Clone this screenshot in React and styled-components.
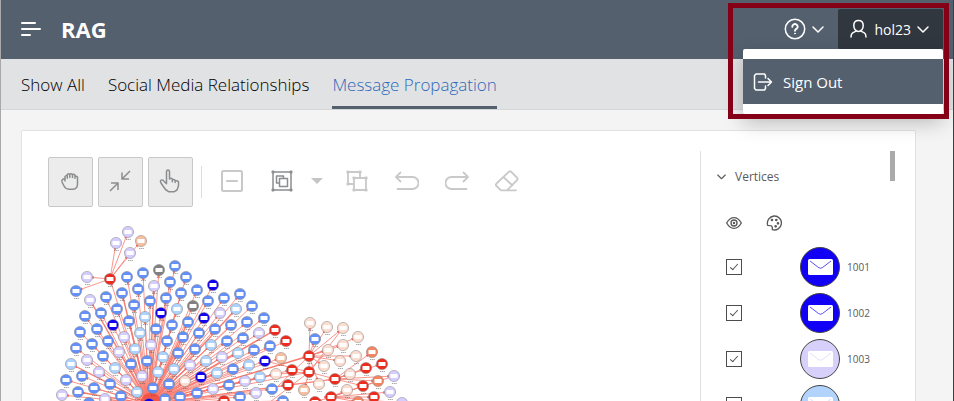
import React from "react";
import styled, { createGlobalStyle, css } from "styled-components";

const GlobalStyle = createGlobalStyle`
  *, *::before, *::after { box-sizing: border-box; }
  body {
    margin: 0;
    overflow: hidden;
    font-family: "Open Sans", "Noto Sans", sans-serif;
    color: #1b1d1f;
  }
  button { font: inherit; color: inherit; border: 0; background: none; padding: 0; cursor: pointer; }
  svg { display: block; flex: none; }
`;

const Page = styled.div`
  position: relative;
  display: flex;
  flex-direction: column;
  height: 100vh;
  background: #f4f4f4;
  border-left: 1px solid #a9a9a9;
  border-right: 1px solid #3b3f44;
`;

const Header = styled.header`
  display: flex;
  align-items: center;
  flex: none;
  height: 59px;
  padding: 0 10px 1px 20px;
  background: #54606e;
  color: #fff;
`;

const Brand = styled.h1`
  flex: 1;
  margin: 0 0 0 20px;
  font-size: 22px;
  line-height: 28px;
  font-weight: 700;
`;

const HeaderButton = styled.button`
  display: flex;
  align-items: center;
  gap: 6px;
  height: 40px;
  padding: 0 14px 0 12px;
  border-radius: 2px;
  font-size: 14px;
  background: ${(p) => (p.$open ? "#30373f" : "transparent")};
`;

const UserMenu = styled.div`
  position: relative;
`;

const Menu = styled.div`
  position: absolute;
  z-index: 2;
  top: 100%;
  right: 0;
  width: 200px;
  padding: 10px 0;
  border-radius: 2px;
  background: #fff;
  box-shadow: 0 8px 20px rgba(0, 0, 0, 0.25);
`;

const MenuItem = styled.button`
  display: flex;
  align-items: center;
  gap: 10px;
  width: 100%;
  height: 45px;
  padding: 0 10px;
  background: #54606e;
  color: #fff;
  font-size: 15px;
`;

const Highlight = styled.div`
  position: absolute;
  z-index: 3;
  top: 3px;
  right: 4px;
  width: 221px;
  height: 116px;
  border: 5px solid #850016;
  pointer-events: none;
`;

const Tabs = styled.nav`
  display: flex;
  flex: none;
  gap: 23px;
  height: 51px;
  padding: 0 20px;
  background: #e1e2e4;
  border-bottom: 1px solid #d6d7d8;
`;

const Tab = styled.a`
  display: flex;
  align-items: center;
  height: 50px;
  border-top: 3px solid transparent;
  border-bottom: 3px solid ${(p) => (p.$active ? "#54606e" : "transparent")};
  color: ${(p) => (p.$active ? "#2f68b8" : "#000")};
  font-size: 17px;
  font-weight: 300;
  text-decoration: none;
  white-space: nowrap;
`;

const Card = styled.main`
  display: flex;
  flex: 1;
  min-height: 0;
  margin: 20px 37px 0 20px;
  padding: 20px 20px 0 26px;
  overflow: hidden;
  background: #fff;
  border: 1px solid #e2e2e2;
  border-bottom: 0;
  border-radius: 2px 2px 0 0;
`;

const GraphArea = styled.section`
  flex: 1;
  min-width: 0;
  padding-top: 6px;
`;

const Toolbar = styled.div`
  display: flex;
  align-items: center;
  gap: 5px;
  color: #c9c9c9;
`;

const Tool = styled.button`
  display: flex;
  align-items: center;
  justify-content: center;
  width: ${(p) => (p.$narrow ? "25px" : "45px")};
  height: 50px;
  padding: 0 1px 2px 0;
  border-radius: 2px;
  ${(p) => p.$dark && css`color: #8b8d8f;`}
  ${(p) =>
    p.$boxed &&
    css`
      color: #8b8d8f;
      background: #ececec;
      border: 1px solid #c8c8c8;
    `}
`;

const ToolGroup = styled.div`
  display: flex;
`;

const Divider = styled.span`
  width: 1px;
  height: 32px;
  margin: 0 3px;
  background: #dcdcdc;
`;

const Legend = styled.aside`
  display: flex;
  align-items: flex-start;
  width: 195px;
  border-left: 1px solid #dfdfdf;
  color: #5a5a5a;
`;

const LegendBody = styled.div`
  flex: 1;
`;

const LegendHeading = styled.button`
  display: flex;
  align-items: center;
  gap: 9px;
  height: 50px;
  padding-left: 16px;
  font-size: 12px;
`;

const LegendActions = styled.div`
  display: flex;
  align-items: center;
  gap: 24px;
  height: 43px;
  padding-left: 25px;
`;

const VertexList = styled.ul`
  margin: 0;
  padding: 0;
  list-style: none;
`;

const Vertex = styled.label`
  display: grid;
  grid-template-columns: 74px 47px 1fr;
  align-items: center;
  height: 46px;
  padding-left: 25px;
  font-size: 10px;
  line-height: 8px;
`;

const Check = styled.input`
  appearance: none;
  display: grid;
  place-items: center;
  width: 16px;
  height: 16px;
  margin: 0;
  border: 1px solid #4c4c4c;
  background: #fff;
  &:checked::after {
    content: "";
    width: 4px;
    height: 8px;
    margin-bottom: 2px;
    border: solid #4c4c4c;
    border-width: 0 1px 1px 0;
    transform: rotate(42deg);
  }
`;

const ScrollThumb = styled.span`
  width: 5px;
  height: 30px;
  background: #aaa;
`;

function Icon({ size = 24, width = 1.5, children }) {
  return (
    <svg width={size} height={size} viewBox="0 0 24 24" fill="none" stroke="currentColor" strokeWidth={width} strokeLinecap="round" strokeLinejoin="round" aria-hidden="true">
      {children}
    </svg>
  );
}

function Chevron({ size = 12, width = 1.5 }) {
  return (
    <svg width={size} height={size} viewBox="0 0 12 12" fill="none" stroke="currentColor" strokeWidth={width} strokeLinecap="round" strokeLinejoin="round" aria-hidden="true">
      <path d="M1 4l5 5 5-5" />
    </svg>
  );
}

const COLORS = {
  b: "#6490fa", l: "#d5cdff", s: "#acd3ff", k: "#1100f0", r: "#ee2c1e",
  g: "#808080", p: "#fbdccf", o: "#f7bea2", e: "#f48564",
};

const HUB = [149, 404];
const SPOKES = [
  [127,277,"b"],[143,273,"b"],[159,270,"g"],[175,266,"b"],[154,286,"l"],[170,282,"b"],[138,289,"b"],[122,293,"b"],
  [106,297,"b"],[90,300,"l"],[150,301,"b"],[166,298,"b"],[134,305,"b"],[117,309,"b"],[177,309,"s"],[161,313,"k"],
  [101,313,"b"],[186,277,"b"],[181,293,"b"],[197,290,"b"],[213,285,"k"],[208,301,"b"],[193,306,"g"],[224,298,"b"],
  [240,294,"b"],[252,306,"b"],[236,309,"s"],[220,313,"l"],[204,318,"k"],[188,322,"b"],[264,318,"b"],[247,322,"b"],
  [85,316,"b"],[97,329,"b"],[113,325,"k"],[129,321,"b"],[145,317,"s"],[172,325,"b"],[156,329,"b"],[140,333,"s"],
  [124,337,"l"],[108,341,"b"],[92,344,"b"],[80,332,"b"],[76,348,"b"],[71,364,"s"],[87,360,"l"],[103,356,"b"],
  [119,352,"l"],[135,349,"s"],[151,345,"l"],[167,341,"b"],[178,353,"b"],[163,357,"s"],[147,361,"b"],[131,364,"b"],
  [115,368,"s"],[99,372,"l"],[82,376,"b"],[66,380,"b"],[62,395,"l"],[78,392,"b"],[94,388,"b"],[110,384,"b"],
  [126,380,"l"],[142,376,"l"],[158,372,"s"],[174,369,"s"],[169,384,"b"],[153,388,"b"],[137,392,"s"],[121,396,"b"],
  [105,399,"l"],[89,403,"b"],[165,399,"b"],[231,325,"b"],[215,329,"b"],[199,333,"b"],[183,337,"b"],[275,330,"r"],
  [286,341,"r"],[259,333,"l"],[243,338,"b"],[227,341,"b"],[211,345,"s"],[195,349,"b"],[270,346,"b"],[254,350,"b"],
  [238,353,"s"],[222,357,"l"],[206,361,"s"],[190,365,"l"],[265,361,"k"],[281,358,"o"],[292,370,"r"],[249,365,"s"],
  [233,369,"b"],[217,373,"s"],[201,377,"k"],[185,381,"p"],[276,374,"p"],[260,377,"s"],[245,381,"l"],[229,385,"b"],
  [213,389,"l"],[197,393,"b"],[180,397,"b"],[288,385,"r"],[272,389,"b"],[256,393,"l"],[240,397,"b"],[224,401,"r"],
  [283,401,"b"],[110,279,"r"],[309,356,"r"],[309,372,"r"],[335,379,"r"],
];

const BRANCHES = [
  { from: [110, 279], to: [[128,232,"l"],[116,243,"l"],[141,241,"o"],[130,253,"l"],[87,277,"l"],[76,291,"b"]] },
  { from: [309, 356], to: [[310,323,"p"],[327,327,"p"],[343,328,"p"],[315,339,"b"],[358,337,"p"],[343,345,"p"],[328,350,"p"],[356,356,"p"],[340,361,"p"],[324,366,"p"],[319,384,"p"]] },
  { from: [309, 372], to: [[304,390,"o"]] },
  { from: [335, 379], to: [[372,352,"e"],[366,368,"r"],[382,364,"r"],[350,374,"p"],[394,376,"l"],[378,381,"e"],[363,386,"r"]] },
  { from: [331, 397], to: [[347,390,"p"],[390,392,"l"],[374,397,"r"],[358,402,"e"],[402,403,"l"],[315,402,"r"],[331,397,"r"]] },
];

const EXTRA_EDGES = [
  [309,356,309,372],[309,372,328,350],[309,372,343,328],[309,372,265,361],[309,372,276,374],[309,372,270,402],
  [309,356,276,388],[335,379,288,385],[331,397,394,376],[331,397,363,386],[309,372,335,379],[331,397,378,381],
];

function GraphNode({ x, y, c }) {
  return (
    <g>
      <circle cx={x} cy={y} r="5.6" fill={COLORS[c]} stroke="#808080" strokeWidth="0.5" />
      <rect x={x - 3.5} y={y - 2} width="7" height="4" rx="0.5" fill="#fff" />
      <path d={`M${x - 2} ${y + 7.5}h5`} stroke="#555" strokeWidth="1" strokeDasharray="1.3 0.5" opacity="0.5" />
    </g>
  );
}

function Graph() {
  const leaves = BRANCHES.flatMap((b) => b.to);
  return (
    <svg width="400" height="200" viewBox="48 207 400 200" role="img" aria-label="Message propagation graph">
      <defs>
        <marker id="arrow" viewBox="0 0 4 4" refX="9" refY="2" markerWidth="3" markerHeight="3" markerUnits="userSpaceOnUse" orient="auto">
          <path d="M0 0l4 2-4 2z" fill="#f03a2c" />
        </marker>
      </defs>
      <g stroke="#fa5a4c" strokeWidth="0.8" opacity="0.8">
        {SPOKES.map(([x, y]) => (
          <line key={`${x}-${y}`} x1={HUB[0]} y1={HUB[1]} x2={x} y2={y} strokeWidth={(x + y) % 5 === 0 ? 1.4 : 0.8} markerEnd="url(#arrow)" />
        ))}
        {BRANCHES.map((b) =>
          b.to.map(([x, y]) => (
            <line key={`${x}-${y}`} x1={b.from[0]} y1={b.from[1]} x2={x} y2={y} markerEnd="url(#arrow)" />
          ))
        )}
        {EXTRA_EDGES.map(([a, b, c, d]) => (
          <line key={`${a}-${b}-${c}-${d}`} x1={a} y1={b} x2={c} y2={d} />
        ))}
      </g>
      <circle cx="151" cy="404" r="11" fill="#ee3a2c" opacity="0.6" />
      {[...SPOKES, ...leaves].map(([x, y, c]) => (
        <GraphNode key={`${x}-${y}`} x={x} y={y} c={c} />
      ))}
      <GraphNode x={149} y={404} c="k" />
    </svg>
  );
}

function VertexBadge({ color }) {
  return (
    <svg width="40" height="40" viewBox="0 0 40 40" aria-hidden="true">
      <circle cx="20" cy="20" r="19.5" fill={color} stroke="#444" />
      <rect x="8" y="12" width="25" height="16" rx="1.5" fill="#fff" />
      <path d="M10 14l8.500 6.500q2 1.500 4 0L31 14" fill="none" stroke={color} strokeWidth="0.7" />
    </svg>
  );
}

const VERTICES = [
  { id: "1001", color: "#1100f5" },
  { id: "1002", color: "#1100f5" },
  { id: "1003", color: "#d6d0fa" },
  { id: "1004", color: "#b2d3fc" },
];

export default function App() {
  return (
    <Page>
      <GlobalStyle />
      <Header>
        <button aria-label="Toggle navigation">
          <svg width="20" height="16" viewBox="0 0 20 16" stroke="#fff" strokeWidth="2" strokeLinecap="round">
            <path d="M1 2h13M1 8h18M1 14h8" />
          </svg>
        </button>
        <Brand>RAG</Brand>
        <HeaderButton aria-label="Help">
          <svg width="22" height="22" viewBox="0 0 22 22" fill="none" stroke="#fff" strokeWidth="1.5" strokeLinecap="round">
            <circle cx="11" cy="11" r="9.700" />
            <path d="M8.300 8.700a2.700 2.600 0 1 1 4.300 2c-1 .7-1.600 1-1.600 2.100" strokeWidth="1.900" />
            <circle cx="11" cy="15.500" r="0.500" fill="#fff" strokeWidth="1" />
          </svg>
          <Chevron />
        </HeaderButton>
        <UserMenu>
          <HeaderButton $open aria-expanded="true">
            <svg width="18" height="20" viewBox="0 0 18 20" fill="none" stroke="#fff" strokeWidth="1.500" strokeLinecap="round" strokeLinejoin="round">
              <path d="M8.500 1.500c-2.900 0-4.700 2-4.700 5 0 3.300 2 6 4.700 6s4.700-2.700 4.700-6c0-3-1.800-5-4.700-5z" />
              <path d="M6 12.200l-3.300 1.600C1.500 14.500 1 15.500 1 18M11 12.200l3.300 1.600c1.200.7 1.700 1.700 1.700 4.200" />
            </svg>
            hol23
            <Chevron />
          </HeaderButton>
          <Menu role="menu">
            <MenuItem role="menuitem">
              <svg width="20" height="20" viewBox="0 0 20 20" fill="none" stroke="#fff" strokeWidth="1.500" strokeLinecap="round" strokeLinejoin="round">
                <path d="M12.500 6V3.500l-1-1.500H3L1.500 3.500v13L3 18h8.500l1-1.500V14M5.500 10h13M15 6.500l3.500 3.500-3.500 3.500" />
              </svg>
              Sign Out
            </MenuItem>
          </Menu>
        </UserMenu>
      </Header>
      <Highlight />
      <Tabs>
        <Tab href="#all">Show All</Tab>
        <Tab href="#social">Social Media Relationships</Tab>
        <Tab href="#messages" $active aria-current="page">Message Propagation</Tab>
      </Tabs>
      <Card>
        <GraphArea>
          <Toolbar role="toolbar">
            <Tool $boxed aria-label="Pan">
              <Icon width={1.5}>
                <path d="M7 12V7.500q1.200-1.500 2.300-.5V5.500q1.300-1.300 2.500-.2 1.400-1.200 2.700.2 1.400-.8 2.500.6v1.400q1.600-.8 2.500.7V15.500q-.3 4.300-4.300 4.800H11q-3.500-.3-5-3.300l-2-4q-.6-1.900 1-2.800l2-.7M9.300 7v2.200M11.800 5.500v3M14.500 5.500v3M17 7v2.200" />
              </Icon>
            </Tool>
            <Tool $boxed aria-label="Fit to screen">
              <Icon width={1.5}>
                <path d="M22 2l-8 8M14 3.500V10h7M2 22l8-8M3 14h7v7" strokeLinecap="butt" strokeLinejoin="miter" />
              </Icon>
            </Tool>
            <Tool $boxed aria-label="Select">
              <Icon width={1.5}>
                <path d="M8.500 14V3Q8.500 1 10 1t1.500 2v7q1.200-1.500 2.800 0v1q1.300-1.300 2.800.2v1q1.500-1 3.400.4V17l-1.500 4-3 1.800h-5L7.500 20.500 5 17l-2.300-3.500q-.8-2.200 1-2.500 1.600-.2 2.500 1.500l2.300 2.300M14.300 10.500v2.300M17.100 11.500v2" />
              </Icon>
            </Tool>
            <Divider />
            <Tool aria-label="Collapse">
              <Icon width={2}>
                <rect x="2" y="2" width="20" height="20" rx="1.500" />
                <path d="M7 12h10" />
              </Icon>
            </Tool>
            <ToolGroup>
              <Tool $dark aria-label="Group">
                <Icon width={1.5}>
                  <path d="M3 3h18v18H3z" />
                  <path d="M13.500 9.500V7h-7v7H9M9.500 9.500h8v8h-8z" />
                  <path d="M2.500 2.500h1v1h-1zM20.500 2.500h1v1h-1zM2.500 20.500h1v1h-1zM20.500 20.500h1v1h-1z" strokeWidth="2" />
                </Icon>
              </Tool>
              <Tool $narrow aria-label="Group options">
                <svg width="12" height="6" viewBox="0 0 12 6"><path d="M0 0h12L6 6z" fill="#c5c5c5" /></svg>
              </Tool>
            </ToolGroup>
            <Tool aria-label="Ungroup">
              <Icon width={1.8}>
                <path d="M8 15H3V3h12v5M9 9h12v12H9z" />
                <path d="M2.500 2.500h1v1h-1zM14.500 2.500h1v1h-1zM2.500 14.500h1v1h-1zM8.500 8.500h1v1h-1zM20.500 8.500h1v1h-1zM8.500 20.500h1v1h-1zM20.500 20.500h1v1h-1z" strokeWidth="2.200" />
              </Icon>
            </Tool>
            <Tool aria-label="Undo">
              <Icon width={1.8}><path d="M5.500 3.500L1 8l4.500 4.500M1 8h16.500a6 6 0 0 1 0 12H2.500" /></Icon>
            </Tool>
            <Tool aria-label="Redo">
              <Icon width={1.8}><path d="M18.500 3.500L23 8l-4.500 4.500M23 8H6.500a6 6 0 0 0 0 12h15" /></Icon>
            </Tool>
            <Tool aria-label="Clear">
              <Icon width={1.8}><path d="M1.500 14.500L14 2.700q1-.8 2 0l6.300 6.300q.7 1-.1 2L12 21.300H6L1.500 17q-1.200-1.200 0-2.500zM9 8.500l8.500 8M6 21.300h15" /></Icon>
            </Tool>
          </Toolbar>
          <Graph />
        </GraphArea>
        <Legend>
          <LegendBody>
            <LegendHeading aria-expanded="true">
              <Chevron size={9} width={1.5} />
              Vertices
            </LegendHeading>
            <LegendActions>
              <button aria-label="Visibility">
                <Icon size={16} width={2}>
                  <path d="M1 12q4.500-8 11-8t11 8q-4.500 8-11 8T1 12z" />
                  <circle cx="12" cy="12" r="4.500" />
                  <circle cx="12" cy="12" r="0.800" />
                </Icon>
              </button>
              <button aria-label="Colors">
                <Icon size={16} width={2}>
                  <path d="M12 1.500A10.500 10.500 0 1 1 9.500 22V18.500q-.3-2.500-3-2.500l-4-.5A11 11 0 0 1 12 1.500z" />
                  <g fill="currentColor">
                    <circle cx="9" cy="7.500" r="1" /><circle cx="15.500" cy="7.500" r="1" />
                    <circle cx="18" cy="12.500" r="1" /><circle cx="14.500" cy="17" r="1" />
                  </g>
                </Icon>
              </button>
            </LegendActions>
            <VertexList>
              {VERTICES.map((v) => (
                <li key={v.id}>
                  <Vertex>
                    <Check type="checkbox" defaultChecked />
                    <VertexBadge color={v.color} />
                    {v.id}
                  </Vertex>
                </li>
              ))}
            </VertexList>
          </LegendBody>
          <ScrollThumb />
        </Legend>
      </Card>
    </Page>
  );
}
